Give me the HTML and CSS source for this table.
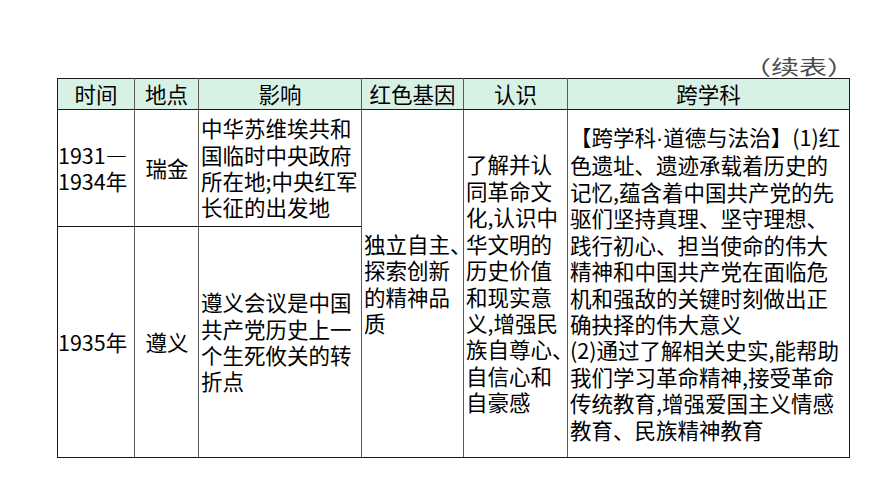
FILE: index.html
```html
<!DOCTYPE html>
<html lang="zh-CN">
<head>
<meta charset="utf-8">
<title>续表</title>
<link rel="stylesheet" href="styles.css">
</head>
<body>
<div class="page">
  <div class="caption"><span class="caption-text">（续表）</span></div>
  <table class="grid">
    <colgroup>
      <col class="c-time">
      <col class="c-place">
      <col class="c-effect">
      <col class="c-gene">
      <col class="c-know">
      <col class="c-cross">
    </colgroup>
    <thead>
      <tr class="head">
        <th>时间</th>
        <th>地点</th>
        <th>影响</th>
        <th>红色基因</th>
        <th>认识</th>
        <th>跨学科</th>
      </tr>
    </thead>
    <tbody>
      <tr class="row-a">
        <td class="left">1931—<br>1934年</td>
        <td class="center">瑞金</td>
        <td class="left">中华苏维埃共和<br>国临时中央政府<br>所在地;中央红军<br>长征的出发地</td>
        <td class="left" rowspan="2">独立自主、<br>探索创新<br>的精神品<br>质</td>
        <td class="left" rowspan="2">了解并认<br>同革命文<br>化,认识中<br>华文明的<br>历史价值<br>和现实意<br>义,增强民<br>族自尊心、<br>自信心和<br>自豪感</td>
        <td class="left last" rowspan="2">【跨学科<span class="dot">·</span>道德与法治】(1)红<br>色遗址、遗迹承载着历史的<br>记忆,蕴含着中国共产党的先<br>驱们坚持真理、坚守理想、<br>践行初心、担当使命的伟大<br>精神和中国共产党在面临危<br>机和强敌的关键时刻做出正<br>确抉择的伟大意义<br>(2)通过了解相关史实,能帮助<br>我们学习革命精神,接受革命<br>传统教育,增强爱国主义情感<br>教育、民族精神教育</td>
      </tr>
      <tr class="row-b">
        <td class="left">1935年</td>
        <td class="center">遵义</td>
        <td class="left">遵义会议是中国<br>共产党历史上一<br>个生死攸关的转<br>折点</td>
      </tr>
    </tbody>
  </table>
</div>
</body>
</html>
```
FILE: styles.css
```css
html, body {
  margin: 0;
  padding: 0;
  background: #ffffff;
}

.page {
  padding: 53px 0 0 57px;
  width: 792px;
  font-family: "Noto Sans CJK SC", "Noto Sans", sans-serif;
  font-size: 21.5px;
  color: #000;
  text-spacing-trim: space-all;
}

.caption {
  text-align: right;
  line-height: 25px;
  height: 25px;
}

.caption-text {
  display: inline-block;
  font-size: 20px;
  color: #4a4a4a;
  transform-origin: right center;
  transform: translateX(6px) scaleX(1.4);
}

.dot {
  font-family: "Liberation Sans", sans-serif;
}

.grid {
  border-collapse: collapse;
  table-layout: fixed;
  width: 792px;
}

.c-time { width: 77px; }
.c-place { width: 64px; }
.c-effect { width: 163px; }
.c-gene { width: 102px; }
.c-know { width: 104px; }
.c-cross { width: 282px; }

.grid th,
.grid td {
  border-top: 1px solid #1a1a1a;
  border-bottom: 1px solid #1a1a1a;
  border-left: 1px solid #5a5a5a;
  border-right: 1px solid #5a5a5a;
  padding: 0 1px 0 2px;
  line-height: 26.4px;
  white-space: nowrap;
  overflow: visible;
  vertical-align: middle;
  font-weight: normal;
}

.grid th:first-child,
.grid td:first-child {
  border-left-color: #1a1a1a;
}

.grid th:last-child,
.grid td.last {
  border-right-color: #1a1a1a;
}

.grid th {
  background: #d8f1e5;
  text-align: center;
  height: 30px;
  padding: 0;
}

.grid td.left { text-align: left; }
.grid td.center { text-align: center; }

.row-a td { height: 116px; }
.row-b td { height: 230px; }

.grid td:first-child { padding-left: 0; }
```
